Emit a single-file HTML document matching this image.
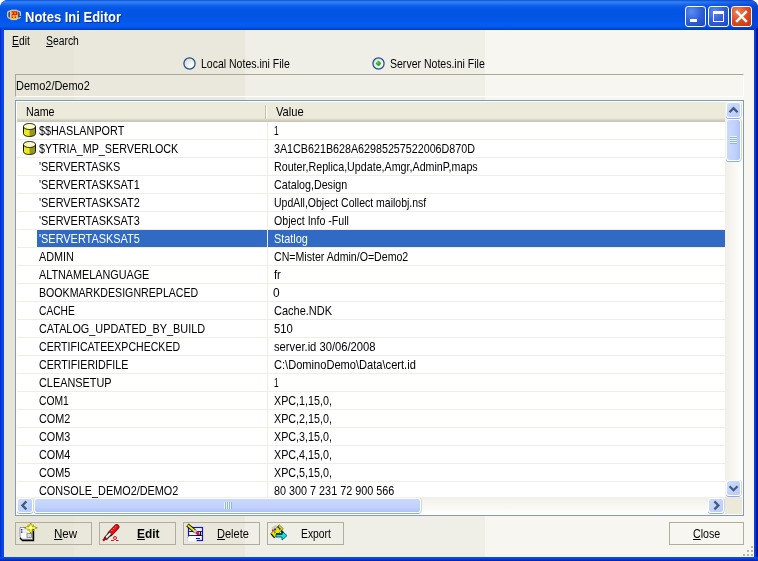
<!DOCTYPE html>
<html><head><meta charset="utf-8"><title>Notes Ini Editor</title>
<style>
*{box-sizing:border-box;margin:0;padding:0}
html,body{width:758px;height:561px;overflow:hidden;background:#fff}
body{font-family:"Liberation Sans",sans-serif;font-size:11px;color:#000;position:relative}
.abs{position:absolute}
.tx{position:absolute;white-space:pre;transform-origin:0 50%;font-family:"Liberation Sans",sans-serif}
#win{position:absolute;left:0;top:0;width:758px;height:561px;overflow:hidden;border-radius:8px 8px 0 0;background:#0A3FDB}
#title{position:absolute;left:0;top:0;width:758px;height:30px;
 background:linear-gradient(to bottom,#0A50D8 0,#3886F4 2px,#2274F2 3.5px,#0B5EEA 6px,#0355E4 9px,#0254E2 15px,#0356E8 20px,#045CF0 24px,#045AEC 26.5px,#0449D2 28.5px,#0339B8 30px)}
#title:after{content:"";position:absolute;left:680px;top:0;width:78px;height:30px;background:linear-gradient(to right,rgba(0,40,190,0),rgba(0,40,190,0.45))}
#body{position:absolute;left:4px;top:30px;width:750px;height:527px;
 background:linear-gradient(to right,#E6E5D8 0,#E6E5D8 70px,#EAE8DC 70px,#EAE8DC 241px,#EFEFE7 241px,#EFEFE7 481px,#F7F6F1 481px,#F7F6F1 750px)}
.lb{position:absolute;left:0;top:28px;width:4px;height:533px;background:linear-gradient(to right,#0028BC 0,#0838DA 1px,#0A44E4 2px,#0C4CEA 4px)}
.rb{position:absolute;left:754px;top:28px;width:4px;height:533px;background:linear-gradient(to right,#0B46E2,#0A38D2 45%,#001CA8 60%,#00139F)}
.bb{position:absolute;left:0;top:557px;width:758px;height:4px;background:linear-gradient(to bottom,#0E50EA 0,#0A40DC 45%,#0530C4 70%,#0022AC 100%)}
u{text-decoration:underline}
#txl{position:absolute;left:0;top:0;width:758px;height:561px;will-change:transform;transform:translateZ(0)}
.cb{position:absolute;top:6px;width:21px;height:21px;border:1px solid #fff;border-radius:3px}
.blue{background:radial-gradient(circle at 30% 25%,#5C8CF0 0,#2E5FDC 50%,#1F44C0 100%)}
.red{background:radial-gradient(circle at 30% 25%,#EE8660 0,#E2481E 50%,#C6340F 100%)}
#list{position:absolute;left:15px;top:100px;width:729px;height:416px;border:1px solid #7F9DB9;background:#fff;overflow:hidden}
#hdr{position:absolute;left:0;top:0;width:711px;height:21px;background:linear-gradient(to bottom,#EBEADB 0,#EBEADB 17px,#E2DECD 18px,#D6D2C2 19px,#CBC7B8 20px,#CBC7B8 21px)}
.gl{position:absolute;left:0;width:711px;height:1px;background:#F0EEE1}
.btn{position:absolute;top:522px;height:23px;border:1px solid #B0AE98}
.sbtn{position:absolute;border-radius:3px;background:linear-gradient(135deg,#CDDCFD,#B9CBF8);border:1px solid #fff;box-shadow:1px 0 0 #C9D6F2,0 1px 0 #8DAAEA}
</style></head><body>
<div id="win">
<div id="title"></div>
<div class="lb"></div><div class="rb"></div><div class="bb"></div>
<div id="body"></div>

<svg class="abs" style="left:6px;top:9px" width="16" height="12" viewBox="0 0 16 12"><rect x="1.6" y="2.2" width="12.8" height="7" rx="2.2" fill="#505050" stroke="#C2CADC" stroke-width="1.3"/><rect x="4.6" y="1.2" width="6.6" height="9.4" rx="0.6" fill="#F8C606" stroke="#CDD2DC" stroke-width="1"/><path d="M5.5 2.9h2.2v2.4H6.2v1.1M8.4 2.9h2.2v2.4H9.1v1.1" stroke="#E41808" stroke-width="1.3" fill="none"/><path d="M5.6 8.3h1.5M8.6 8.3h1.5" stroke="#E41808" stroke-width="1.4"/><path d="M12.6 7.6h2.6" stroke="#3A3A3A" stroke-width="1"/></svg>
<div class="cb blue" style="left:685px"><div class="abs" style="left:4px;top:12px;width:7px;height:3px;background:#fff"></div></div>
<div class="cb blue" style="left:708px"><div class="abs" style="left:4px;top:4px;width:11px;height:11px;border:1px solid #fff;border-top-width:3px"></div></div>
<div class="cb red" style="left:731px"><svg class="abs" style="left:0;top:0" width="19" height="19" viewBox="0 0 19 19"><path d="M4.2 4.2L14.8 14.8M14.8 4.2L4.2 14.8" stroke="#fff" stroke-width="2.4" stroke-linecap="butt"/></svg></div>

<svg class="abs" style="left:183px;top:57px" width="13" height="13" viewBox="0 0 13 13"><defs><radialGradient id="rga" cx="0.7" cy="0.7" r="0.8"><stop offset="0" stop-color="#fff"/><stop offset="1" stop-color="#DADAD0"/></radialGradient></defs><circle cx="6.5" cy="6.5" r="5.6" fill="url(#rga)" stroke="#1D4F8F" stroke-width="1.25"/></svg>
<svg class="abs" style="left:372px;top:57px" width="13" height="13" viewBox="0 0 13 13"><defs><radialGradient id="rgb" cx="0.7" cy="0.7" r="0.8"><stop offset="0" stop-color="#fff"/><stop offset="1" stop-color="#DADAD0"/></radialGradient></defs><circle cx="6.5" cy="6.5" r="5.6" fill="url(#rgb)" stroke="#1D4F8F" stroke-width="1.25"/><rect x="4.3" y="4.3" width="4.4" height="4.4" rx="1.2" transform="rotate(45 6.5 6.5)" fill="#27B027"/><circle cx="5.9" cy="5.8" r="1" fill="#5FD45F"/></svg>
<div class="abs" style="left:15px;top:74px;width:729px;height:23px;border-top:1px solid #ACA899;border-left:1px solid #ACA899;border-right:1px solid #fff;border-bottom:1px solid #fff"></div>
<div class="abs" style="left:15px;top:100px;width:729px;height:416px;border:1px solid #7F9DB9;background:#fff"></div>
<div class="abs" style="left:17px;top:102px;width:708px;height:20px;background:linear-gradient(to bottom,#EBEADB 0,#EBEADB 16px,#E2DECD 17px,#D6D2C2 18px,#CBC7B8 19px,#CBC7B8 20px)"></div><div class="abs" style="left:265px;top:105px;width:1px;height:14px;background:#C5C2B2"></div><div class="abs" style="left:266px;top:105px;width:1px;height:14px;background:#fff"></div>
<div class="abs" style="left:17px;top:139px;width:708px;height:1px;background:#F0EEE1"></div>
<svg class="abs" style="left:23px;top:123px" width="13" height="14" viewBox="0 0 13 14"><path d="M0.5 3.5V10.5C0.5 12.4 3.5 13.5 6.5 13.5S12.5 12.4 12.5 10.5V3.5Z" fill="#ECEA1E"/><path d="M6.5 5V13.5C9.5 13.5 12.5 12.4 12.5 10.5V3.5Z" fill="#9A981C"/><ellipse cx="6.5" cy="3.5" rx="6" ry="3" fill="#FBFAC4"/><path d="M0.5 3.5V10.5C0.5 12.4 3.5 13.5 6.5 13.5S12.5 12.4 12.5 10.5V3.5M0.5 3.5C0.5 5.4 3.5 6.5 6.5 6.5S12.5 5.4 12.5 3.5C12.5 1.6 9.5 0.5 6.5 0.5S0.5 1.6 0.5 3.5Z" fill="none" stroke="#111" stroke-width="1"/></svg>
<div class="abs" style="left:17px;top:157px;width:708px;height:1px;background:#F0EEE1"></div>
<svg class="abs" style="left:23px;top:141px" width="13" height="14" viewBox="0 0 13 14"><path d="M0.5 3.5V10.5C0.5 12.4 3.5 13.5 6.5 13.5S12.5 12.4 12.5 10.5V3.5Z" fill="#ECEA1E"/><path d="M6.5 5V13.5C9.5 13.5 12.5 12.4 12.5 10.5V3.5Z" fill="#9A981C"/><ellipse cx="6.5" cy="3.5" rx="6" ry="3" fill="#FBFAC4"/><path d="M0.5 3.5V10.5C0.5 12.4 3.5 13.5 6.5 13.5S12.5 12.4 12.5 10.5V3.5M0.5 3.5C0.5 5.4 3.5 6.5 6.5 6.5S12.5 5.4 12.5 3.5C12.5 1.6 9.5 0.5 6.5 0.5S0.5 1.6 0.5 3.5Z" fill="none" stroke="#111" stroke-width="1"/></svg>
<div class="abs" style="left:17px;top:175px;width:708px;height:1px;background:#F0EEE1"></div>
<div class="abs" style="left:17px;top:193px;width:708px;height:1px;background:#F0EEE1"></div>
<div class="abs" style="left:17px;top:211px;width:708px;height:1px;background:#F0EEE1"></div>
<div class="abs" style="left:17px;top:229px;width:708px;height:1px;background:#F0EEE1"></div>
<div class="abs" style="left:37px;top:230px;width:230px;height:17px;background:#316AC5"></div>
<div class="abs" style="left:268px;top:230px;width:457px;height:17px;background:#316AC5"></div>
<div class="abs" style="left:17px;top:247px;width:708px;height:1px;background:#F0EEE1"></div>
<div class="abs" style="left:17px;top:265px;width:708px;height:1px;background:#F0EEE1"></div>
<div class="abs" style="left:17px;top:283px;width:708px;height:1px;background:#F0EEE1"></div>
<div class="abs" style="left:17px;top:301px;width:708px;height:1px;background:#F0EEE1"></div>
<div class="abs" style="left:17px;top:319px;width:708px;height:1px;background:#F0EEE1"></div>
<div class="abs" style="left:17px;top:337px;width:708px;height:1px;background:#F0EEE1"></div>
<div class="abs" style="left:17px;top:355px;width:708px;height:1px;background:#F0EEE1"></div>
<div class="abs" style="left:17px;top:373px;width:708px;height:1px;background:#F0EEE1"></div>
<div class="abs" style="left:17px;top:391px;width:708px;height:1px;background:#F0EEE1"></div>
<div class="abs" style="left:17px;top:409px;width:708px;height:1px;background:#F0EEE1"></div>
<div class="abs" style="left:17px;top:427px;width:708px;height:1px;background:#F0EEE1"></div>
<div class="abs" style="left:17px;top:445px;width:708px;height:1px;background:#F0EEE1"></div>
<div class="abs" style="left:17px;top:463px;width:708px;height:1px;background:#F0EEE1"></div>
<div class="abs" style="left:17px;top:481px;width:708px;height:1px;background:#F0EEE1"></div>
<div class="abs" style="left:267px;top:122px;width:1px;height:375px;background:#F0EEE1"></div>
<div class="abs" style="left:725px;top:102px;width:17px;height:395px;background:linear-gradient(to right,#F1EFE8,#FEFEFB)"></div>
<div class="sbtn" style="left:726px;top:102px;width:15px;height:16px;"><svg class="abs" style="left:0;top:0" width="13" height="13" viewBox="0 0 13 13"><path d="M2.5 9.2L6.5 5.2L10.5 9.2" fill="none" stroke="#455A82" stroke-width="2.3"/></svg></div>
<div class="sbtn" style="left:726px;top:119px;width:15px;height:42px;background:linear-gradient(to right,#C9D9FD,#C1D2FB 60%,#AFC3F3)"><div class="abs" style="left:3px;top:16px;width:7px;height:8px;background:repeating-linear-gradient(to bottom,#EEF4FE 0,#EEF4FE 1px,#8CB0F8 1px,#8CB0F8 2px)"></div></div>
<div class="sbtn" style="left:726px;top:480px;width:15px;height:16px;"><svg class="abs" style="left:0;top:0" width="13" height="13" viewBox="0 0 13 13"><path d="M2.5 5.2L6.5 9.2L10.5 5.2" fill="none" stroke="#455A82" stroke-width="2.3"/></svg></div>
<div class="abs" style="left:17px;top:497px;width:708px;height:17px;background:linear-gradient(to bottom,#F1EFE8,#FEFEFB)"></div>
<div class="abs" style="left:725px;top:497px;width:17px;height:17px;background:#ECE9D8"></div>
<div class="sbtn" style="left:17px;top:498px;width:16px;height:15px;"><svg class="abs" style="left:0;top:0" width="13" height="13" viewBox="0 0 13 13"><path d="M8.4 2.4L4.4 6.4L8.4 10.4" fill="none" stroke="#455A82" stroke-width="2.3"/></svg></div>
<div class="sbtn" style="left:34px;top:498px;width:387px;height:15px;background:linear-gradient(to bottom,#C9D9FD,#C1D2FB 60%,#AFC3F3)"><div class="abs" style="left:189px;top:3px;width:8px;height:7px;background:repeating-linear-gradient(to right,#EEF4FE 0,#EEF4FE 1px,#8CB0F8 1px,#8CB0F8 2px)"></div></div>
<div class="sbtn" style="left:708px;top:498px;width:16px;height:15px;"><svg class="abs" style="left:0;top:0" width="13" height="13" viewBox="0 0 13 13"><path d="M5.4 2.4L9.4 6.4L5.4 10.4" fill="none" stroke="#455A82" stroke-width="2.3"/></svg></div>
<div class="btn" style="left:15px;width:77px"></div>
<div class="btn" style="left:99px;width:77px"></div>
<div class="btn" style="left:183px;width:77px"></div>
<div class="btn" style="left:267px;width:77px"></div>
<div class="btn" style="left:669px;width:75px"></div>

<svg class="abs" style="left:0;top:520px" width="360" height="30" viewBox="0 520 360 30">
<!-- New -->
<g>
<path d="M20 527.5H32.5V539.5H22.5L20 537Z" fill="#FDFDFD" stroke="#8A8A8A" stroke-width="0.9"/>
<path d="M33.5 528.5V540.5H22.5L20 538" fill="none" stroke="#000" stroke-width="1.4"/>
<rect x="21" y="529" width="1.4" height="1.4" fill="#1010E0"/><rect x="21" y="531.4" width="1.4" height="1.4" fill="#1010E0"/>
<path d="M23.5 529.7H28M23.5 532.1H28M21.5 538.3H31" stroke="#B4B4B4" stroke-width="1" stroke-dasharray="1 1"/>
<rect x="27" y="533.5" width="4.5" height="4" fill="#DCDCDC" stroke="#808080" stroke-width="0.8"/>
<path d="M30.7 523.6L32 526.5L36.8 527.8L32 529.1L30.7 533.2L29.4 529.1L24.8 527.8L29.4 526.5Z" fill="#F4F200" stroke="#8A8800" stroke-width="1.3" stroke-linejoin="round"/>
<path d="M27.6 524.8L33.8 530.8M33.8 524.8L27.6 530.8" stroke="#A8A400" stroke-width="1.2" stroke-dasharray="1.3 1.2"/>
<path d="M30.7 524.6V532M26.2 527.8H35.4" stroke="#F8F600" stroke-width="2.2"/>
<circle cx="30.7" cy="527.8" r="1.7" fill="#fff"/>
</g>
<!-- Edit -->
<g>
<path d="M110.2 533.6L116.7 526.9" stroke="#700000" stroke-width="5.4" stroke-linecap="round"/>
<path d="M110.2 533.6L116.7 526.9" stroke="#E81010" stroke-width="4" stroke-linecap="round"/>
<path d="M111.5 530.8L115.5 526.8" stroke="#FFC8C8" stroke-width="1" stroke-dasharray="1.2 1.2"/>
<path d="M105.2 538.8L110.6 533.2" stroke="#202020" stroke-width="4"/>
<path d="M105.6 538.2L110.4 533.3" stroke="#F0F0F0" stroke-width="2"/>
<path d="M103 540.6L106.2 537.6" stroke="#B00000" stroke-width="2.2"/>
<circle cx="115" cy="538" r="1.5" fill="none" stroke="#C81010" stroke-width="1"/>
<path d="M111 540.5H113.8M116 540.5H118.5" stroke="#C81010" stroke-width="1"/>
</g>
<!-- Delete -->
<g>
<rect x="188.5" y="527.5" width="14" height="13" fill="#F4F4FA" stroke="#1818B0" stroke-width="1.2"/>
<path d="M189 531.5H202M189 535.5H202M192 538.5H200" stroke="#1818B0" stroke-width="1"/>
<path d="M188 536.5H195L197 541.5H188Z" fill="#fff"/>
<path d="M187.4 525L195.4 531.6" stroke="#000" stroke-width="3.6"/>
<path d="M187.8 525.3L194.6 530.9" stroke="#F4F000" stroke-width="2"/>
<path d="M194.2 530.6L196.4 532.4" stroke="#D0D0D0" stroke-width="2.6"/>
<path d="M196.2 532.2L198.6 534.2" stroke="#E01030" stroke-width="3"/>
<path d="M198.2 533.8L199 535.6" stroke="#7020C0" stroke-width="2"/>
<path d="M196.5 535.5L200.5 535.5L200.5 532" stroke="#000" stroke-width="1.2" fill="none"/>
</g>
<!-- Export -->
<g>
<path d="M270.8 533.6L279.2 524.8L283.2 528.6L274.6 537.8Z" fill="#F0E000" stroke="#6A6A00" stroke-width="0.8"/>
<path d="M271 533.8L274.6 537.8" stroke="#000" stroke-width="1.2"/>
<path d="M271.5 527.5L276 525L277.5 526.5L272.5 531.5Z" fill="#C8C8D8"/>
<circle cx="272.8" cy="530.5" r="1" fill="#E01010"/><circle cx="275" cy="529.6" r="1" fill="#1010E0"/><circle cx="274.8" cy="532.2" r="1" fill="#10C010"/><circle cx="273.3" cy="527.8" r="0.8" fill="#F0E000"/><circle cx="278.4" cy="527.2" r="1" fill="#1010E0"/><circle cx="279.8" cy="528.8" r="0.9" fill="#1010E0"/>
<path d="M276 534.2H282V531.2L287 535.6L282 540V537H276Z" fill="#00E8F0" stroke="#005858" stroke-width="0.9"/>
<path d="M276 534H281.8V531L283.5 532.4" stroke="#002828" stroke-width="1.3" fill="none"/>
</g>
</svg>

<div class="abs" style="left:751px;top:546px;width:2px;height:2px;background:#B8B4A2"></div><div class="abs" style="left:747px;top:550px;width:2px;height:2px;background:#B8B4A2"></div><div class="abs" style="left:751px;top:550px;width:2px;height:2px;background:#B8B4A2"></div><div class="abs" style="left:743px;top:554px;width:2px;height:2px;background:#B8B4A2"></div><div class="abs" style="left:747px;top:554px;width:2px;height:2px;background:#B8B4A2"></div><div class="abs" style="left:751px;top:554px;width:2px;height:2px;background:#B8B4A2"></div>
<div id="txl"><span class="tx" style="left:24.59px;top:10.10px;font-size:14px;line-height:14px;transform:scaleX(0.9285);font-weight:bold;color:#fff;text-shadow:1px 1px 0 #0A2F9A;">Notes Ini Editor</span>
<span class="tx" style="left:11.78px;top:35.30px;font-size:12px;line-height:12px;transform:scaleX(0.8624);"><u>E</u>dit</span>
<span class="tx" style="left:45.77px;top:35.30px;font-size:12px;line-height:12px;transform:scaleX(0.8636);"><u>S</u>earch</span>
<span class="tx" style="left:201.36px;top:56.95px;font-size:13px;line-height:13px;transform:scaleX(0.8082);">Local Notes.ini File</span>
<span class="tx" style="left:390.06px;top:56.95px;font-size:13px;line-height:13px;transform:scaleX(0.8096);">Server Notes.ini File</span>
<span class="tx" style="left:16.03px;top:78.95px;font-size:13px;line-height:13px;transform:scaleX(0.8442);">Demo2/Demo2</span>
<span class="tx" style="left:26.05px;top:105.25px;font-size:13px;line-height:13px;transform:scaleX(0.8241);">Name</span>
<span class="tx" style="left:276.02px;top:105.25px;font-size:13px;line-height:13px;transform:scaleX(0.8589);">Value</span>
<span class="tx" style="left:39.14px;top:123.95px;font-size:13px;line-height:13px;transform:scaleX(0.8333);">$$HASLANPORT</span>
<span class="tx" style="left:273.72px;top:123.95px;font-size:13px;line-height:13px;transform:scaleX(0.6344);">1</span>
<span class="tx" style="left:39.15px;top:141.95px;font-size:13px;line-height:13px;transform:scaleX(0.8286);">$YTRIA_MP_SERVERLOCK</span>
<span class="tx" style="left:273.55px;top:141.95px;font-size:13px;line-height:13px;transform:scaleX(0.8250);">3A1CB621B628A62985257522006D870D</span>
<span class="tx" style="left:39.14px;top:159.95px;font-size:13px;line-height:13px;transform:scaleX(0.8370);">'SERVERTASKS</span>
<span class="tx" style="left:273.55px;top:159.95px;font-size:13px;line-height:13px;transform:scaleX(0.8226);">Router,Replica,Update,Amgr,AdminP,maps</span>
<span class="tx" style="left:39.14px;top:177.95px;font-size:13px;line-height:13px;transform:scaleX(0.8400);">'SERVERTASKSAT1</span>
<span class="tx" style="left:273.55px;top:177.95px;font-size:13px;line-height:13px;transform:scaleX(0.8245);">Catalog,Design</span>
<span class="tx" style="left:39.14px;top:195.95px;font-size:13px;line-height:13px;transform:scaleX(0.8400);">'SERVERTASKSAT2</span>
<span class="tx" style="left:273.57px;top:195.95px;font-size:13px;line-height:13px;transform:scaleX(0.8074);">UpdAll,Object Collect mailobj.nsf</span>
<span class="tx" style="left:39.14px;top:213.95px;font-size:13px;line-height:13px;transform:scaleX(0.8400);">'SERVERTASKSAT3</span>
<span class="tx" style="left:273.56px;top:213.95px;font-size:13px;line-height:13px;transform:scaleX(0.8170);">Object Info -Full</span>
<span class="tx" style="left:39.14px;top:231.95px;font-size:13px;line-height:13px;transform:scaleX(0.8400);color:#fff;">'SERVERTASKSAT5</span>
<span class="tx" style="left:273.54px;top:231.95px;font-size:13px;line-height:13px;transform:scaleX(0.8375);color:#fff;">Statlog</span>
<span class="tx" style="left:39.14px;top:249.95px;font-size:13px;line-height:13px;transform:scaleX(0.8331);">ADMIN</span>
<span class="tx" style="left:273.56px;top:249.95px;font-size:13px;line-height:13px;transform:scaleX(0.8151);">CN=Mister Admin/O=Demo2</span>
<span class="tx" style="left:39.14px;top:267.95px;font-size:13px;line-height:13px;transform:scaleX(0.8313);">ALTNAMELANGUAGE</span>
<span class="tx" style="left:273.52px;top:267.95px;font-size:13px;line-height:13px;transform:scaleX(0.8603);">fr</span>
<span class="tx" style="left:39.16px;top:285.95px;font-size:13px;line-height:13px;transform:scaleX(0.8166);">BOOKMARKDESIGNREPLACED</span>
<span class="tx" style="left:273.47px;top:285.95px;font-size:13px;line-height:13px;transform:scaleX(0.9164);">0</span>
<span class="tx" style="left:39.18px;top:303.95px;font-size:13px;line-height:13px;transform:scaleX(0.7872);">CACHE</span>
<span class="tx" style="left:273.53px;top:303.95px;font-size:13px;line-height:13px;transform:scaleX(0.8453);">Cache.NDK</span>
<span class="tx" style="left:39.14px;top:321.95px;font-size:13px;line-height:13px;transform:scaleX(0.8361);">CATALOG_UPDATED_BY_BUILD</span>
<span class="tx" style="left:273.51px;top:321.95px;font-size:13px;line-height:13px;transform:scaleX(0.8688);">510</span>
<span class="tx" style="left:39.16px;top:339.95px;font-size:13px;line-height:13px;transform:scaleX(0.8126);">CERTIFICATEEXPCHECKED</span>
<span class="tx" style="left:273.52px;top:339.95px;font-size:13px;line-height:13px;transform:scaleX(0.8619);">server.id 30/06/2008</span>
<span class="tx" style="left:39.15px;top:357.95px;font-size:13px;line-height:13px;transform:scaleX(0.8203);">CERTIFIERIDFILE</span>
<span class="tx" style="left:273.52px;top:357.95px;font-size:13px;line-height:13px;transform:scaleX(0.8535);">C:\DominoDemo\Data\cert.id</span>
<span class="tx" style="left:39.14px;top:375.95px;font-size:13px;line-height:13px;transform:scaleX(0.8374);">CLEANSETUP</span>
<span class="tx" style="left:273.72px;top:375.95px;font-size:13px;line-height:13px;transform:scaleX(0.6344);">1</span>
<span class="tx" style="left:39.18px;top:393.95px;font-size:13px;line-height:13px;transform:scaleX(0.7916);">COM1</span>
<span class="tx" style="left:273.55px;top:393.95px;font-size:13px;line-height:13px;transform:scaleX(0.8271);">XPC,1,15,0,</span>
<span class="tx" style="left:39.14px;top:411.95px;font-size:13px;line-height:13px;transform:scaleX(0.8333);">COM2</span>
<span class="tx" style="left:273.55px;top:411.95px;font-size:13px;line-height:13px;transform:scaleX(0.8271);">XPC,2,15,0,</span>
<span class="tx" style="left:39.14px;top:429.95px;font-size:13px;line-height:13px;transform:scaleX(0.8333);">COM3</span>
<span class="tx" style="left:273.55px;top:429.95px;font-size:13px;line-height:13px;transform:scaleX(0.8271);">XPC,3,15,0,</span>
<span class="tx" style="left:39.14px;top:447.95px;font-size:13px;line-height:13px;transform:scaleX(0.8333);">COM4</span>
<span class="tx" style="left:273.55px;top:447.95px;font-size:13px;line-height:13px;transform:scaleX(0.8271);">XPC,4,15,0,</span>
<span class="tx" style="left:39.14px;top:465.95px;font-size:13px;line-height:13px;transform:scaleX(0.8333);">COM5</span>
<span class="tx" style="left:273.55px;top:465.95px;font-size:13px;line-height:13px;transform:scaleX(0.8271);">XPC,5,15,0,</span>
<span class="tx" style="left:39.14px;top:483.95px;font-size:13px;line-height:13px;transform:scaleX(0.8348);">CONSOLE_DEMO2/DEMO2</span>
<span class="tx" style="left:273.54px;top:483.95px;font-size:13px;line-height:13px;transform:scaleX(0.8320);">80 300 7 231 72 900 566</span>
<span class="tx" style="left:53.79px;top:526.55px;font-size:13px;line-height:13px;transform:scaleX(0.8914);"><u>N</u>ew</span>
<span class="tx" style="left:137.17px;top:526.55px;font-size:13px;line-height:13px;transform:scaleX(0.9129);font-weight:bold;"><u>E</u>dit</span>
<span class="tx" style="left:216.83px;top:526.55px;font-size:13px;line-height:13px;transform:scaleX(0.8496);"><u>D</u>elete</span>
<span class="tx" style="left:301.18px;top:526.55px;font-size:13px;line-height:13px;transform:scaleX(0.7940);">Export</span>
<span class="tx" style="left:692.65px;top:526.55px;font-size:13px;line-height:13px;transform:scaleX(0.8204);"><u>C</u>lose</span></div>
</div></body></html>
